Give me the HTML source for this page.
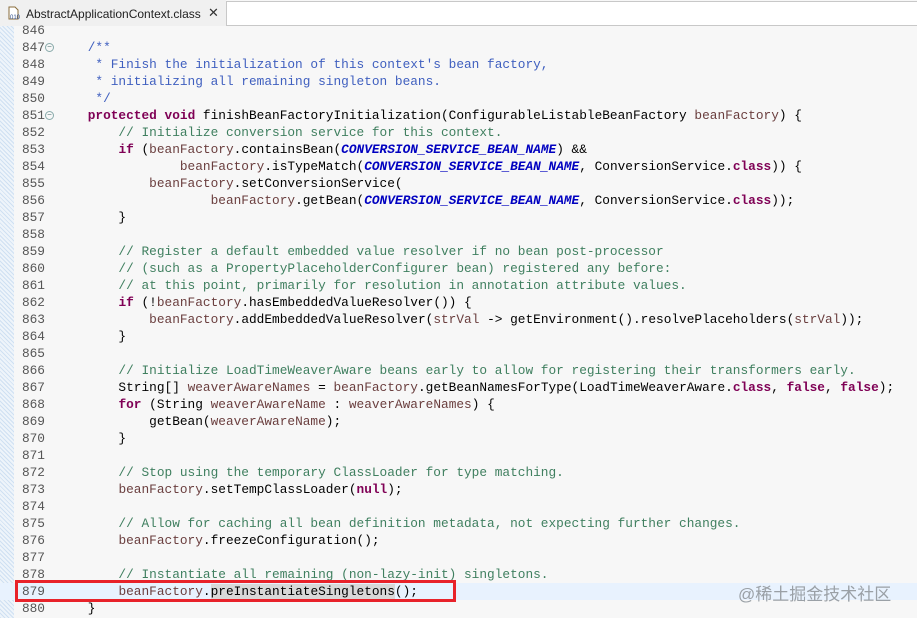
<!DOCTYPE html>
<html><head><meta charset="utf-8"><style>
*{margin:0;padding:0;box-sizing:border-box}
body{width:917px;height:618px;overflow:hidden;background:#f7f7f7;position:relative;font-family:"Liberation Mono",monospace;font-size:12.8px}
.tabbar{position:absolute;left:0;top:0;width:917px;height:26px;background:#f7f7f7}
.tab{position:absolute;left:0;top:0;width:226px;height:26px;background:#f0f0f0;font-family:"Liberation Sans",sans-serif;font-size:12px;color:#222;padding:7px 0 0 26px}
.tab .x{position:absolute;left:208px;top:5px;font-size:13px;color:#333}
.blank{position:absolute;left:226px;top:1px;right:0;height:25px;background:#fff;border:1px solid #c8c8c8;border-right:none}
.icon{position:absolute;left:6px;top:5px;width:16px;height:16px}
.stripe{position:absolute;left:0;top:26px;width:14px;height:592px;background:repeating-linear-gradient(45deg,#cfe0f2 0 1px,#eef4fa 1px 3px)}
.lines{position:absolute;left:0;top:22px;width:917px}
.l{height:17px;line-height:17px;position:relative;white-space:pre;color:#000}
.n{position:absolute;left:16px;width:29px;text-align:right;color:#555}
.f{position:absolute;left:45px;top:4px;width:9px;height:9px;border:1px solid #8aa;border-radius:50%;font-size:8px;line-height:7px;text-align:center;color:#577}
.c{position:absolute;left:57px}
.hl{background:#e8f2fe}
.k{color:#7f0055;font-weight:bold}.cm{color:#3f7f5f}.jd{color:#3f5fbf}.v{color:#6a3e3e}.cs{color:#0000c0;font-weight:bold;font-style:italic}
.box{position:absolute;left:15px;top:580px;width:441px;height:22px;border:3px solid #e8222a}
.wm{position:absolute;left:738px;top:580px;font-family:"Liberation Sans","Noto Sans CJK SC",sans-serif;font-size:17px;color:#9aa0a6}
.sel{background:#d8d8d8}
</style></head><body>
<div class="tabbar"><div class="tab"><svg class="icon" viewBox="0 0 16 16"><path d="M3 2h6l3 3v9H3z" fill="#fff" stroke="#8a6d3b"/><text x="4" y="14" font-size="6" fill="#2a4a8a" font-family="Liberation Sans">010</text></svg>AbstractApplicationContext.class<span class="x">✕</span></div><div class="blank"></div></div>
<div class="stripe"></div>
<div class="lines">
<div class="l"><span class="n">846</span></div>
<div class="l"><span class="n">847</span><span class="f">−</span><span class="c jd">    /**</span></div>
<div class="l"><span class="n">848</span><span class="c jd">     * Finish the initialization of this context's bean factory,</span></div>
<div class="l"><span class="n">849</span><span class="c jd">     * initializing all remaining singleton beans.</span></div>
<div class="l"><span class="n">850</span><span class="c jd">     */</span></div>
<div class="l"><span class="n">851</span><span class="f">−</span><span class="c">    <span class="k">protected</span> <span class="k">void</span> finishBeanFactoryInitialization(ConfigurableListableBeanFactory <span class="v">beanFactory</span>) {</span></div>
<div class="l"><span class="n">852</span><span class="c cm">        // Initialize conversion service for this context.</span></div>
<div class="l"><span class="n">853</span><span class="c">        <span class="k">if</span> (<span class="v">beanFactory</span>.containsBean(<span class="cs">CONVERSION_SERVICE_BEAN_NAME</span>) &amp;&amp;</span></div>
<div class="l"><span class="n">854</span><span class="c">                <span class="v">beanFactory</span>.isTypeMatch(<span class="cs">CONVERSION_SERVICE_BEAN_NAME</span>, ConversionService.<span class="k">class</span>)) {</span></div>
<div class="l"><span class="n">855</span><span class="c">            <span class="v">beanFactory</span>.setConversionService(</span></div>
<div class="l"><span class="n">856</span><span class="c">                    <span class="v">beanFactory</span>.getBean(<span class="cs">CONVERSION_SERVICE_BEAN_NAME</span>, ConversionService.<span class="k">class</span>));</span></div>
<div class="l"><span class="n">857</span><span class="c">        }</span></div>
<div class="l"><span class="n">858</span></div>
<div class="l"><span class="n">859</span><span class="c cm">        // Register a default embedded value resolver if no bean post-processor</span></div>
<div class="l"><span class="n">860</span><span class="c cm">        // (such as a PropertyPlaceholderConfigurer bean) registered any before:</span></div>
<div class="l"><span class="n">861</span><span class="c cm">        // at this point, primarily for resolution in annotation attribute values.</span></div>
<div class="l"><span class="n">862</span><span class="c">        <span class="k">if</span> (!<span class="v">beanFactory</span>.hasEmbeddedValueResolver()) {</span></div>
<div class="l"><span class="n">863</span><span class="c">            <span class="v">beanFactory</span>.addEmbeddedValueResolver(<span class="v">strVal</span> -&gt; getEnvironment().resolvePlaceholders(<span class="v">strVal</span>));</span></div>
<div class="l"><span class="n">864</span><span class="c">        }</span></div>
<div class="l"><span class="n">865</span></div>
<div class="l"><span class="n">866</span><span class="c cm">        // Initialize LoadTimeWeaverAware beans early to allow for registering their transformers early.</span></div>
<div class="l"><span class="n">867</span><span class="c">        String[] <span class="v">weaverAwareNames</span> = <span class="v">beanFactory</span>.getBeanNamesForType(LoadTimeWeaverAware.<span class="k">class</span>, <span class="k">false</span>, <span class="k">false</span>);</span></div>
<div class="l"><span class="n">868</span><span class="c">        <span class="k">for</span> (String <span class="v">weaverAwareName</span> : <span class="v">weaverAwareNames</span>) {</span></div>
<div class="l"><span class="n">869</span><span class="c">            getBean(<span class="v">weaverAwareName</span>);</span></div>
<div class="l"><span class="n">870</span><span class="c">        }</span></div>
<div class="l"><span class="n">871</span></div>
<div class="l"><span class="n">872</span><span class="c cm">        // Stop using the temporary ClassLoader for type matching.</span></div>
<div class="l"><span class="n">873</span><span class="c">        <span class="v">beanFactory</span>.setTempClassLoader(<span class="k">null</span>);</span></div>
<div class="l"><span class="n">874</span></div>
<div class="l"><span class="n">875</span><span class="c cm">        // Allow for caching all bean definition metadata, not expecting further changes.</span></div>
<div class="l"><span class="n">876</span><span class="c">        <span class="v">beanFactory</span>.freezeConfiguration();</span></div>
<div class="l"><span class="n">877</span></div>
<div class="l"><span class="n">878</span><span class="c cm">        // Instantiate all remaining (non-lazy-init) singletons.</span></div>
<div class="l hl"><span class="n">879</span><span class="c">        <span class="v">beanFactory</span>.<span class="sel">preInstantiateSingletons</span>();</span></div>
<div class="l"><span class="n">880</span><span class="c">    }</span></div>
</div>
<div class="box"></div>
<div class="wm">@稀土掘金技术社区</div>
</body></html>
